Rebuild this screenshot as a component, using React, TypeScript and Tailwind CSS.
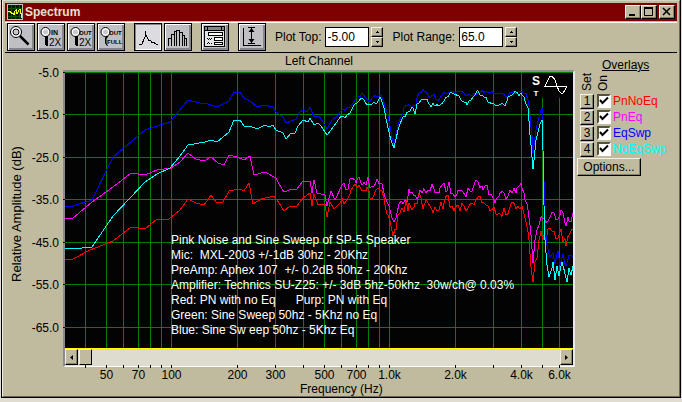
import React, { FC, ReactNode, useState } from "react";
import clsx from "clsx";

type Point = [number, number];

interface Overlay {
  id: number;
  label: string;
  textClass: string;
}

const OVERLAYS: Overlay[] = [
  { id: 1, label: "PnNoEq", textClass: "text-[#ff0000]" },
  { id: 2, label: "PnEq", textClass: "text-[#ff00ff]" },
  { id: 3, label: "EqSwp", textClass: "text-[#0000ff]" },
  { id: 4, label: "NoEqSwp", textClass: "text-[#00ffff]" },
];

const NOTES = [
  "Pink Noise and Sine Sweep of SP-5 Speaker",
  "Mic:  MXL-2003 +/-1dB 30hz - 20Khz",
  "PreAmp: Aphex 107  +/- 0.2dB 50hz - 20Khz",
  "Amplifier: Technics SU-Z25: +/- 3dB 5hz-50khz  30w/ch@ 0.03%",
  "Red: PN with no Eq      Purp: PN with Eq",
  "Green: Sine Sweep 50hz - 5Khz no Eq",
  "Blue: Sine Sw eep 50hz - 5Khz Eq",
];

const GRID_FREQS = [
  40, 50, 60, 70, 80, 90, 100, 200, 300, 400, 500, 600, 700, 800, 900, 1000,
  2000, 3000, 4000, 5000, 6000,
];

const FREQ_LABELS: [number, string][] = [
  [50, "50"],
  [70, "70"],
  [100, "100"],
  [200, "200"],
  [300, "300"],
  [500, "500"],
  [700, "700"],
  [1000, "1.0k"],
  [2000, "2.0k"],
  [4000, "4.0k"],
  [6000, "6.0k"],
];

const DB_LEVELS = [-5, -15, -25, -35, -45, -55, -65];

// plot units: x runs 65..573, y runs 72..348
const freqX = (f: number) => Math.floor(171.9 + 218 * Math.log10(f / 100)) + 0.5;
const freqPercent = (f: number) => `${((freqX(f) - 65) / 508) * 100}%`;
const dbY = (db: number) => Math.floor(72.4 + (-5 - db) * 4.25) + 0.5;

const BLUE: Point[] = [
  [65, 206], [73, 206], [92, 200], [113, 157], [125, 147], [145, 130], [157, 126],
  [170, 122], [179, 111], [188, 100], [200, 103], [208, 104], [217, 107], [229, 101],
  [234, 92], [240, 92], [244, 98], [250, 101], [257, 107], [264, 105], [273, 107],
  [276, 112], [283, 117], [286, 123], [296, 119], [299, 113], [303, 110], [307, 112],
  [310, 107], [314, 117], [319, 116], [323, 122], [327, 129], [332, 120], [337, 116],
  [341, 111], [351, 107], [356, 98], [363, 94], [369, 102], [373, 97], [381, 95],
  [388, 115], [392, 138], [394, 144], [398, 125], [403, 113], [404, 108], [409, 105],
  [416, 104], [417, 98], [419, 93], [424, 91], [430, 98], [434, 94], [438, 101],
  [442, 95], [448, 93], [456, 92], [470, 95], [480, 92], [500, 93], [506, 97],
  [510, 92], [526, 93], [529, 105], [532, 135], [533, 153], [536, 130], [540, 113],
  [542, 108], [543, 120], [544, 180], [545, 225], [547, 245], [550, 257], [553, 253],
  [555, 264], [558, 251], [560, 265], [563, 254], [566, 266], [569, 255], [573, 257],
];

const CYAN: Point[] = [
  [65, 248], [82, 248], [92, 247], [113, 216], [130, 198], [145, 182], [157, 174],
  [170, 168], [180, 156], [188, 145], [205, 142], [211, 140], [217, 142], [229, 132],
  [234, 120], [240, 120], [244, 126], [250, 126], [257, 129], [265, 125], [269, 127],
  [273, 125], [276, 130], [283, 133], [286, 139], [291, 133], [295, 133], [298, 126],
  [303, 120], [308, 122], [310, 118], [314, 125], [318, 123], [321, 126], [327, 135],
  [334, 126], [341, 116], [345, 118], [350, 113], [355, 104], [362, 98], [368, 105],
  [374, 102], [377, 103], [380, 97], [384, 108], [388, 128], [391, 140], [394, 148],
  [398, 130], [403, 117], [408, 112], [413, 108], [415, 114], [417, 104], [425, 99],
  [429, 104], [438, 106], [444, 101], [450, 93], [457, 96], [464, 102], [467, 105],
  [473, 97], [478, 91], [484, 97], [491, 104], [505, 106], [508, 97], [515, 91],
  [524, 97], [528, 108], [531, 145], [533, 169], [536, 140], [540, 124], [542, 120],
  [543, 150], [544, 205], [545, 240], [547, 265], [549, 277], [552, 268], [553, 262],
  [555, 280], [557, 266], [559, 276], [562, 262], [565, 274], [567, 282], [569, 268],
  [571, 275], [573, 266],
];

const MAGENTA: Point[] = [
  [65, 218], [73, 218], [92, 202], [113, 187], [131, 173], [145, 175], [157, 170],
  [171, 168], [180, 162], [188, 153], [196, 159], [204, 161], [211, 157], [218, 163],
  [224, 165], [229, 155], [237, 157], [244, 160], [250, 156], [254, 175], [265, 172],
  [276, 178], [279, 184], [284, 192], [292, 189], [296, 190], [303, 181], [309, 182],
  [310, 181], [312, 193], [314, 180], [317, 193], [325, 195], [327, 206], [331, 191],
  [335, 200], [342, 185], [348, 189], [351, 178], [356, 183], [359, 177], [362, 185],
  [366, 185], [368, 177], [370, 188], [373, 187], [377, 179], [382, 184], [385, 197],
  [390, 210], [394, 222], [397, 213], [399, 204], [405, 200], [410, 193], [415, 195],
  [420, 190], [430, 191], [432, 184], [435, 193], [440, 188], [444, 183], [447, 191],
  [449, 182], [453, 194], [458, 190], [466, 197], [470, 191], [478, 182], [483, 190],
  [487, 185], [491, 194], [497, 198], [500, 193], [506, 199], [510, 190], [517, 188],
  [522, 188], [525, 200], [528, 210], [531, 235], [533, 263], [535, 240], [539, 225],
  [544, 218], [552, 212], [556, 220], [561, 210], [566, 226], [569, 221], [573, 213],
];

const RED: Point[] = [
  [65, 259], [73, 259], [90, 250], [113, 241], [131, 227], [145, 229], [157, 219],
  [169, 219], [180, 210], [188, 199], [196, 203], [204, 205], [211, 195], [217, 203],
  [223, 202], [229, 191], [240, 189], [244, 191], [249, 183], [253, 204], [261, 199],
  [274, 196], [279, 203], [284, 211], [290, 206], [296, 207], [303, 198], [310, 193],
  [312, 206], [314, 194], [318, 205], [325, 204], [327, 217], [330, 202], [334, 209],
  [340, 203], [348, 198], [351, 190], [355, 184], [360, 187], [364, 191], [367, 187],
  [370, 198], [374, 195], [378, 188], [382, 191], [385, 205], [388, 215], [392, 231],
  [393, 236], [396, 230], [398, 215], [402, 208], [409, 203], [412, 210], [415, 203],
  [421, 198], [424, 205], [427, 201], [431, 208], [435, 207], [444, 203], [448, 195],
  [452, 206], [458, 205], [466, 211], [472, 203], [478, 197], [486, 205], [494, 207],
  [498, 214], [506, 215], [510, 207], [518, 206], [522, 206], [526, 222], [529, 240],
  [533, 282], [535, 262], [539, 240], [544, 235], [552, 231], [556, 239], [561, 229],
  [566, 246], [573, 230],
];

const tracePoints = (points: Point[], amplitude: number, seed: number) => {
  let state = seed;
  const out: string[] = [];
  points.forEach(([x, y], i) => {
    out.push(`${x},${y}`);
    const next = points[i + 1];
    if (!next || x < 340) return;
    const level = x < 400 ? amplitude / 2 : amplitude;
    for (let px = x + 2; px < next[0]; px += 2) {
      state = (state * 16807) % 2147483647;
      const base = y + ((next[1] - y) * (px - x)) / (next[0] - x);
      const noise = (state / 2147483647 - 0.5) * 2 * level;
      out.push(`${px},${(base + noise).toFixed(1)}`);
    }
  });
  return out.join(" ");
};

const TRACES = [
  { color: "#ff0000", points: tracePoints(RED, 7, 91) },
  { color: "#ff00ff", points: tracePoints(MAGENTA, 6, 417) },
  { color: "#0000ff", points: tracePoints(BLUE, 2, 53) },
  { color: "#00ffff", points: tracePoints(CYAN, 2, 77) },
];

const raised =
  "border border-t-[#f4f1e4] border-l-[#f4f1e4] border-b-black border-r-black shadow-[inset_-1px_-1px_0_#85806a] bg-[#c0ba9e]";

interface ToolButtonProps {
  label: string;
  pressed?: boolean;
  children: ReactNode;
}

const ToolButton: FC<ToolButtonProps> = ({ label, pressed, children }) => (
  <button
    type="button"
    aria-label={label}
    aria-pressed={pressed}
    className={clsx(
      "h-7 w-7 shrink-0 border border-black",
      pressed
        ? "bg-[#dcdce0] shadow-[inset_1px_1px_0_#85858a,inset_-1px_-1px_0_#fff]"
        : "bg-[#c0c0c4] shadow-[inset_1px_1px_0_#fff,inset_-2px_-2px_0_#85858a]"
    )}
  >
    <svg
      viewBox="0 0 26 26"
      className="block h-[26px] w-[26px]"
      fill="none"
      stroke="#000"
      fontFamily="Liberation Sans, sans-serif"
    >
      {children}
    </svg>
  </button>
);

const Lens = () => (
  <>
    <circle cx="7.5" cy="8" r="3.5" fill="#c8c8cc" stroke="#fff" strokeWidth="2" />
    <circle cx="7.5" cy="8" r="4.5" />
  </>
);

const Handle = () => (
  <path d="M7 12h3v9l-1 1h-1l-1-1z" fill="#000" stroke="none" shapeRendering="crispEdges" />
);

const WindowButton: FC<{ label: string; children: ReactNode }> = ({ label, children }) => (
  <button type="button" aria-label={label} className={clsx("h-[14px] w-4", raised)}>
    <svg viewBox="0 0 14 12" className="block h-3 w-[14px]" fill="none" stroke="#000">
      {children}
    </svg>
  </button>
);

const NumberField: FC<{ id: string; label: string; initial: string }> = ({
  id,
  label,
  initial,
}) => {
  const [value, setValue] = useState(initial);
  const step = (amount: number, digits: number) =>
    setValue((parseFloat(value) + amount).toFixed(digits));
  const digits = initial.split(".")[1].length;
  return (
    <div className="flex items-center">
      <label htmlFor={id} className="mr-1 whitespace-nowrap">
        {label}
      </label>
      <input
        id={id}
        type="text"
        value={value}
        onChange={(e) => setValue(e.target.value)}
        className="h-5 w-11 border border-black bg-white px-px pb-px outline-none"
      />
      <div className="ml-0.5 flex flex-col">
        <button
          type="button"
          aria-label={`Increase ${label}`}
          onClick={() => step(1, digits)}
          className={clsx("flex h-[10px] w-3 items-center justify-center", raised)}
        >
          <svg viewBox="0 0 4 2" className="h-0.5 w-1" shapeRendering="crispEdges">
            <path d="M0 2h4L2 0z" />
          </svg>
        </button>
        <button
          type="button"
          aria-label={`Decrease ${label}`}
          onClick={() => step(-1, digits)}
          className={clsx("flex h-[10px] w-3 items-center justify-center", raised)}
        >
          <svg viewBox="0 0 4 2" className="h-0.5 w-1" shapeRendering="crispEdges">
            <path d="M0 0h4L2 2z" />
          </svg>
        </button>
      </div>
    </div>
  );
};

const TitleBar = () => (
  <header className="flex h-[18px] items-center bg-[#7f0000] pl-0.5 pr-0.5">
    <svg viewBox="0 0 16 16" className="h-4 w-4 shrink-0" shapeRendering="crispEdges">
      <rect width="16" height="16" fill="#c0c0c0" />
      <rect x="1" y="1" width="14" height="14" fill="#001800" />
      <path d="M4.5 1v14M8.5 1v14M12.5 1v14M1 4.5h14M1 8.5h14M1 12.5h14" stroke="#005000" />
      <path
        d="M1 7.500h2M3 7l2 3 1-1 1 2 1-4 1-1v3l1 1 2-4M12 5.500h1l1 4 1 4"
        fill="none"
        stroke="#ffff00"
      />
    </svg>
    <h1 className="ml-0.5 flex-1 font-bold text-[#e6e0d0]">Spectrum</h1>
    <WindowButton label="Minimize">
      <path d="M3 9h6" strokeWidth="2" />
    </WindowButton>
    <WindowButton label="Maximize">
      <path d="M2.500 2v7.500h8V2" />
      <path d="M2 2h9" strokeWidth="2" />
    </WindowButton>
    <div className="ml-0.5 flex">
      <WindowButton label="Close">
        <path d="M3 2l7 7M10 2l-7 7" strokeWidth="1.500" />
      </WindowButton>
    </div>
  </header>
);

const Toolbar = () => (
  <div className="mt-px flex items-center gap-[9px] border-b border-t border-b-black border-t-white pl-0.5 pb-px">
    <div className="flex gap-0.5">
      <ToolButton label="Zoom">
        <path d="M11.500 11.500l9 9" strokeWidth="2.500" />
        <circle cx="8" cy="8" r="4" fill="#c8c8cc" stroke="#fff" strokeWidth="3" />
        <circle cx="8" cy="8" r="5.500" />
        <circle cx="8" cy="8" r="3" />
      </ToolButton>
      <ToolButton label="Zoom in 2X">
        <Lens />
        <Handle />
        <text x="13" y="11" fontSize="7" fontWeight="bold" fill="#000" stroke="none">
          IN
        </text>
        <text x="11" y="22" fontSize="10" fill="#000" stroke="none">
          2X
        </text>
      </ToolButton>
      <ToolButton label="Zoom out 2X">
        <Lens />
        <Handle />
        <text x="11" y="11" fontSize="6" fontWeight="bold" fill="#000" stroke="none">
          OUT
        </text>
        <text x="11" y="22" fontSize="10" fill="#000" stroke="none">
          2X
        </text>
      </ToolButton>
      <ToolButton label="Zoom out full">
        <Lens />
        <path d="M8 12h2.500l-2 3v4l1.500 3h-1l-2-3v-5z" fill="#000" stroke="none" />
        <text x="11" y="11" fontSize="6" fontWeight="bold" fill="#000" stroke="none">
          OUT
        </text>
        <text x="9" y="20" fontSize="6" fontWeight="bold" fill="#000" stroke="none">
          FULL
        </text>
      </ToolButton>
    </div>
    <div className="flex gap-0.5">
      <ToolButton label="Line graph" pressed>
        <path
          d="M4 20.500h3M7 20l2-5 1.500-3V7v3l2 4 1 2h2l1 2 3 1 3 2"
          shapeRendering="crispEdges"
        />
      </ToolButton>
      <ToolButton label="Bar graph">
        <path
          d="M3.500 22v-8h3M6.500 22V10.500h3M9.500 22V7.500h2M11.500 22V6.500h3V22M14.500 8.500h3V22M17.500 11.500h2V22M19.500 14.500h2V22"
          shapeRendering="crispEdges"
        />
      </ToolButton>
    </div>
    <ToolButton label="Options">
      <g shapeRendering="crispEdges">
        <rect x="2.500" y="2.500" width="20" height="20" fill="#e4e4e8" />
        <rect x="3" y="3" width="19" height="3" fill="#85858a" stroke="none" />
        <path d="M3 6.500h19M5.500 2v4M19.500 2v4" />
        <rect x="6.500" y="8.500" width="14" height="3" fill="#fff" />
        <rect x="12.500" y="13.500" width="8" height="3" fill="#fff" />
        <rect x="12.500" y="18.500" width="8" height="2" fill="#fff" />
        <path d="M5 14.500h1m1 0h1m1 0h1M6 15.500h1m1 0h1M5 19.500h1m1 0h1m1 0h1M6 18.500h1" />
      </g>
    </ToolButton>
    <ToolButton label="Auto range">
      <path d="M4.500 4v17.500H22M9 3.500h7M9 19.500h7M12.500 4v15" shapeRendering="crispEdges" />
      <path d="M12.500 4l3 4h-6zM12.500 19l3-4h-6z" fill="#000" stroke="none" />
    </ToolButton>
    <NumberField id="plot-top" label="Plot Top:" initial="-5.00" />
    <NumberField id="plot-range" label="Plot Range:" initial="65.0" />
  </div>
);

const AmplitudeAxis = () => (
  <svg
    className="relative z-10 h-[278px] w-[58px] shrink-0 overflow-visible text-[12px]"
    role="img"
    aria-label="Relative Amplitude (dB)"
  >
    <text
      transform="translate(16 144) rotate(-90)"
      textAnchor="middle"
      className="text-[13px]"
    >
      Relative Amplitude (dB)
    </text>
    {DB_LEVELS.map((db) => (
      <g key={db}>
        <text x="54" y={dbY(db) - 66} textAnchor="end">
          {db.toFixed(1)}
        </text>
        <path d={`M58 ${dbY(db) - 70}h2`} stroke="#000" shapeRendering="crispEdges" />
      </g>
    ))}
  </svg>
);

const FrequencyAxis = () => (
  <svg className="block h-[29px] w-full overflow-visible text-[12px]">
    {GRID_FREQS.map((f) => (
      <line
        key={f}
        x1={freqPercent(f)}
        x2={freqPercent(f)}
        y1="-2"
        y2="1"
        stroke="#000"
        shapeRendering="crispEdges"
      />
    ))}
    {FREQ_LABELS.map(([f, label]) => (
      <text key={f} x={freqPercent(f)} y="12" textAnchor="middle">
        {label}
      </text>
    ))}
    <text x="54.4%" y="26" textAnchor="middle">
      Frequency (Hz)
    </text>
  </svg>
);

const Plot = () => (
  <div className="relative h-[276px] overflow-hidden bg-[#030303]">
    <svg
      viewBox="65 72 508 276"
      preserveAspectRatio="none"
      className="block h-full w-full"
      fill="none"
      shapeRendering="crispEdges"
    >
      {GRID_FREQS.map((f) => (
        <path
          key={f}
          d={`M${freqX(f)} 72V348`}
          stroke="#008000"
          vectorEffect="non-scaling-stroke"
        />
      ))}
      {DB_LEVELS.map((db) => (
        <path
          key={db}
          d={`M65 ${dbY(db)}H573`}
          stroke="#008000"
          vectorEffect="non-scaling-stroke"
        />
      ))}
      {TRACES.map((trace) => (
        <polyline
          key={trace.color}
          points={trace.points}
          stroke={trace.color}
          vectorEffect="non-scaling-stroke"
        />
      ))}
    </svg>
    <svg
      viewBox="0 0 44 25"
      className="absolute right-0 top-px h-[25px] w-11 bg-[#030303]"
      fill="#fff"
      fontFamily="Liberation Sans, sans-serif"
      fontWeight="bold"
    >
      <text x="7" y="12" fontSize="12" textAnchor="middle">
        S
      </text>
      <text x="7" y="23" fontSize="8" textAnchor="middle">
        T
      </text>
      <path
        d="M15 13.500h23M16 13l3-6 2-4h2l3 4 2 6 2 5 2 2h2l2-3 2-4"
        fill="none"
        stroke="#fff"
        shapeRendering="crispEdges"
      />
    </svg>
    <div className="absolute left-[106px] top-[161px] whitespace-pre leading-[15px] text-white">
      {NOTES.map((note) => (
        <p key={note}>{note}</p>
      ))}
    </div>
  </div>
);

const ScrollBar = () => {
  const [offset, setOffset] = useState(0);
  return (
    <div className="flex h-[18px] items-start border-t border-t-[#ffff00] bg-[#dedbcf]">
      <button
        type="button"
        aria-label="Scroll left"
        onClick={() => setOffset(Math.max(0, offset - 5))}
        className={clsx("flex h-4 w-[13px] items-center justify-center", raised)}
      >
        <svg viewBox="0 0 3 5" className="h-[5px] w-[3px]">
          <path d="M3 0v5L0 2.500z" />
        </svg>
      </button>
      <input
        type="range"
        aria-label="Scroll position"
        value={offset}
        onChange={(e) => setOffset(Number(e.target.value))}
        className="h-4 min-w-0 flex-1 appearance-none bg-transparent pl-px [&::-webkit-slider-thumb]:h-4 [&::-webkit-slider-thumb]:w-[13px] [&::-webkit-slider-thumb]:appearance-none [&::-webkit-slider-thumb]:border [&::-webkit-slider-thumb]:border-t-[#f4f1e4] [&::-webkit-slider-thumb]:border-l-[#f4f1e4] [&::-webkit-slider-thumb]:border-b-black [&::-webkit-slider-thumb]:border-r-black [&::-webkit-slider-thumb]:bg-[#c0ba9e]"
      />
      <button
        type="button"
        aria-label="Scroll right"
        onClick={() => setOffset(Math.min(100, offset + 5))}
        className={clsx("flex h-4 w-[13px] items-center justify-center", raised)}
      >
        <svg viewBox="0 0 3 5" className="h-[5px] w-[3px]">
          <path d="M0 0v5l3-2.500z" />
        </svg>
      </button>
    </div>
  );
};

const OverlaysPanel = () => {
  const [enabled, setEnabled] = useState([1, 2, 3, 4]);
  const toggle = (id: number) =>
    setEnabled(
      enabled.includes(id) ? enabled.filter((e) => e !== id) : [...enabled, id]
    );
  return (
    <aside className="w-[102px] shrink-0 pl-0.5 pt-1">
      <h2 className="pl-[25px] leading-4 underline">Overlays</h2>
      <div className="flex h-5 items-end gap-0.5 pb-0.5 pl-[3px]">
        <span className="w-[14px] rotate-180 leading-[14px] [writing-mode:vertical-rl]">Set</span>
        <span className="w-[14px] rotate-180 leading-[14px] [writing-mode:vertical-rl]">On</span>
      </div>
      <ul className="pl-[3px]">
        {OVERLAYS.map(({ id, label, textClass }) => (
          <li key={id} className="flex h-4 items-center">
            <button
              type="button"
              aria-label={`Set overlay ${id}`}
              className={clsx("h-[15px] w-[14px] leading-[12px]", raised)}
            >
              {id}
            </button>
            <label className={clsx("ml-[3px] flex items-center gap-0.5", textClass)}>
              <span className="relative flex">
                <input
                  type="checkbox"
                  checked={enabled.includes(id)}
                  onChange={() => toggle(id)}
                  className="peer h-[14px] w-[14px] appearance-none border-2 border-b-white border-l-[#55513f] border-r-white border-t-[#55513f] bg-white"
                />
                <svg
                  viewBox="0 0 14 14"
                  className="pointer-events-none absolute inset-0 hidden h-[14px] w-[14px] peer-checked:block"
                  fill="none"
                  stroke="#000"
                  strokeWidth="2"
                >
                  <path d="M3 6l2.500 3L11 3.500" />
                </svg>
              </span>
              {label}
            </label>
          </li>
        ))}
      </ul>
      <button
        type="button"
        className={clsx("mt-px h-[18px] w-16 leading-[14px]", raised)}
      >
        Options...
      </button>
    </aside>
  );
};

const App = () => (
  <div className="min-h-screen bg-[#e0dccf] px-px pb-[3px] font-['Liberation_Sans',Arial,sans-serif] text-[12px] leading-4 text-black">
    <main className="border border-t-0 border-black">
      <div className="border border-b-[#6d6852] border-l-[#f0ede0] border-r-[#6d6852] border-t-[#d8d4c4] bg-[#c0ba9e] px-0.5 pt-0.5">
        <TitleBar />
        <Toolbar />
        <div className="flex">
          <div className="min-w-0 flex-1">
            <p className="ml-[58px] h-[17px] text-center">Left Channel</p>
            <div className="flex">
              <AmplitudeAxis />
              <div className="min-w-0 flex-1">
                <div className="border-2 border-b border-b-white border-l-[#8c8c90] border-r-[#e8e8ec] border-t-[#8c8c90]">
                  <Plot />
                  <ScrollBar />
                </div>
                <div className="px-0.5">
                  <FrequencyAxis />
                </div>
              </div>
            </div>
          </div>
          <OverlaysPanel />
        </div>
      </div>
    </main>
  </div>
);

export default App;
